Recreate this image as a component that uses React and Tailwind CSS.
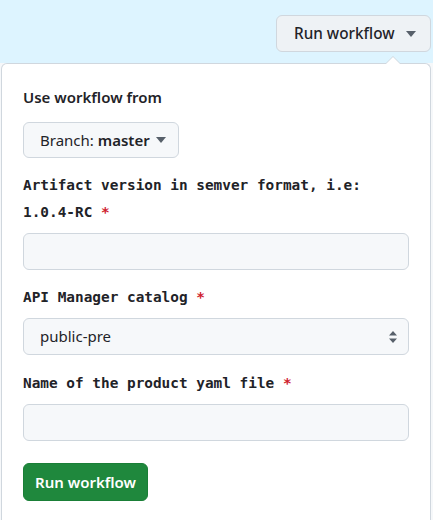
import React from "react";

const sans = { fontFamily: '"Noto Sans", "Open Sans", sans-serif' };
const mono = { fontFamily: '"DejaVu Sans Mono", monospace' };

const Caret = () => (
  <svg width="10" height="6" viewBox="0 0 10 6" className="fill-[#57606a]">
    <path d="M0 0h10L5 6z" />
  </svg>
);

const Label = ({ children }) => (
  <label
    className="block text-[14.4px] leading-[27px] font-bold text-[#1f2328]"
    style={mono}
  >
    {children}&nbsp;<span className="text-[#cf222e]">*</span>
  </label>
);

const TextBox = () => (
  <input
    type="text"
    className="block w-full h-[37px] rounded-md border border-[#d0d7de] bg-[#f6f8fa] px-3 outline-none"
  />
);

const App = () => {
  return (
    <div
      className="w-[433px] h-[520px] overflow-hidden flex flex-col text-[#1f2328]"
      style={sans}
    >
      {/* Top bar */}
      <div className="h-[63px] shrink-0 bg-[#ddf4ff] flex justify-end items-start pt-[15px] pr-[2px]">
        <button className="h-[37px] w-[155px] flex items-center gap-[11px] pl-[17px] rounded-md border border-[#d0d7de] bg-[#eef2f5] text-[15.3px] font-medium">
          Run workflow
          <Caret />
        </button>
      </div>

      {/* Popover */}
      <div className="flex-1 bg-[#f6f8fa] pr-[2px] pl-[1px]">
        <div className="relative h-full rounded-t-md border border-[#d0d7de] border-b-0 bg-white px-[21px] pt-[22px]">
          <div className="absolute -top-[8px] right-[29px] w-0 h-0 border-x-[8px] border-x-transparent border-b-[8px] border-b-[#d0d7de]" />
          <div className="absolute -top-[7px] right-[30px] w-0 h-0 border-x-[7px] border-x-transparent border-b-[7px] border-b-white" />

          <div className="text-[15px] font-semibold leading-[22px]">Use workflow from</div>

          <button className="mt-[14px] h-[36px] w-[156px] flex items-center gap-[6px] pl-[16px] rounded-md border border-[#d0d7de] bg-[#f6f8fa] text-[15px]">
            <span>
              Branch: <span className="font-semibold">master</span>
            </span>
            <Caret />
          </button>

          <div className="mt-[14px]">
            <Label>Artifact version in semver format, i.e: 1.0.4-RC</Label>
            <div className="mt-[7px]">
              <TextBox />
            </div>
          </div>

          <div className="mt-[14px]">
            <Label>API Manager catalog</Label>
            <div className="mt-[7px] relative">
              <select
                className="block w-full h-[37px] appearance-none rounded-md border border-[#d0d7de] bg-[#f6f8fa] pl-[16px] text-[15px] outline-none"
                style={sans}
                defaultValue="public-pre"
              >
                <option value="public-pre">public-pre</option>
              </select>
              <svg
                width="10"
                height="14"
                viewBox="0 0 10 14"
                className="absolute right-[11px] top-[12px] fill-[#57606a] pointer-events-none"
              >
                <path d="M1 5.5L5 1l4 4.5z M1 8.5L5 13l4-4.5z" />
              </svg>
            </div>
          </div>

          <div className="mt-[15px]">
            <Label>Name of the product yaml file</Label>
            <div className="mt-[7px]">
              <TextBox />
            </div>
          </div>

          <button className="mt-[22px] h-[38px] px-[11px] rounded-md bg-[#1f883d] text-white text-[15px] font-semibold border border-[#1a7f37]">
            Run workflow
          </button>
        </div>
      </div>
    </div>
  );
};

export default App;
